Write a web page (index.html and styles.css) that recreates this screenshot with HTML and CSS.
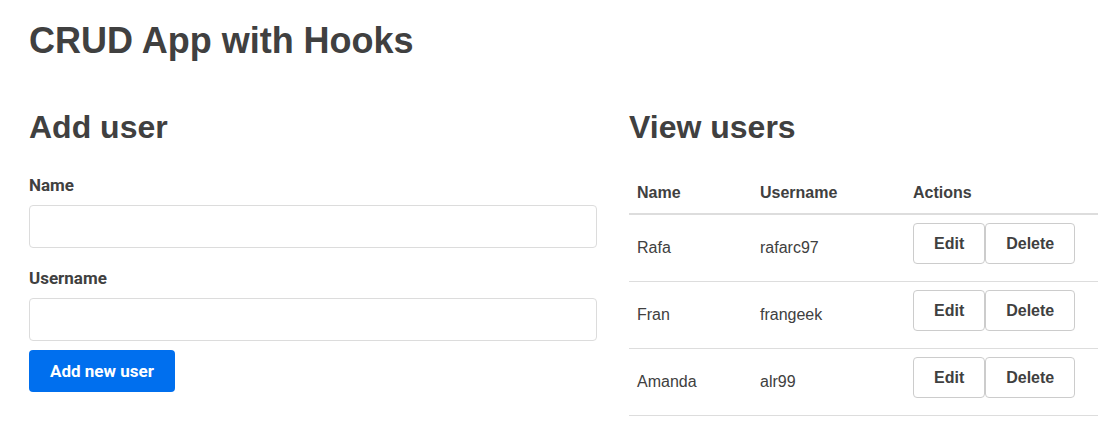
FILE: index.html
```html
<!DOCTYPE html>
<html lang="en">
<head>
<meta charset="utf-8">
<title>CRUD App with Hooks</title>
<link rel="stylesheet" href="styles.css">
</head>
<body>
<div class="container">
  <h1 class="title">CRUD App with Hooks</h1>
  <div class="columns">
    <section class="col">
      <h2 class="section-title">Add user</h2>
      <form class="user-form">
        <label class="field-label" for="name">Name</label>
        <input class="field-input" id="name" type="text">
        <label class="field-label" for="username">Username</label>
        <input class="field-input last" id="username" type="text">
        <button class="btn-primary" type="button">Add new user</button>
      </form>
    </section>
    <section class="col">
      <h2 class="section-title">View users</h2>
      <table class="user-table">
        <thead>
          <tr><th class="c-name">Name</th><th class="c-user">Username</th><th>Actions</th></tr>
        </thead>
        <tbody>
          <tr><td>Rafa</td><td>rafarc97</td><td><div class="actions"><button class="btn-muted">Edit</button><button class="btn-muted">Delete</button></div></td></tr>
          <tr><td>Fran</td><td>frangeek</td><td><div class="actions"><button class="btn-muted">Edit</button><button class="btn-muted">Delete</button></div></td></tr>
          <tr><td>Amanda</td><td>alr99</td><td><div class="actions"><button class="btn-muted">Edit</button><button class="btn-muted">Delete</button></div></td></tr>
        </tbody>
      </table>
    </section>
  </div>
</div>
</body>
</html>
```

FILE: styles.css
```css
html, body {
  margin: 0;
  padding: 0;
  overflow: hidden;
  background: #fff;
}
body {
  font-family: "Liberation Sans", Arial, sans-serif;
  color: #404040;
  font-size: 16px;
}
.container {
  padding: 19px 29px 0;
  width: 1168px;
}
.title {
  margin: 0;
  font-size: 36px;
  line-height: 1.2;
  font-weight: 700;
}
.columns {
  display: grid;
  grid-template-columns: 568px 568px;
  column-gap: 32px;
  margin-top: 46px;
}
.section-title {
  margin: 0;
  font-size: 32px;
  line-height: 1.2;
  font-weight: 700;
}
.user-form {
  display: flex;
  flex-direction: column;
  margin-top: 28px;
}
.field-label {
  font-family: Roboto, sans-serif;
  font-weight: 700;
  font-size: 17px;
  line-height: 20px;
  margin-bottom: 10px;
}
.field-input {
  box-sizing: border-box;
  height: 43px;
  border: 1px solid #dcdcdc;
  border-radius: 4px;
  margin: 0 0 20px;
  padding: 0 12px;
  font-size: 16px;
}
.field-input.last { margin-bottom: 9px; }
.btn-primary {
  align-self: flex-start;
  box-sizing: border-box;
  height: 42px;
  padding: 0 21px;
  border: 0;
  border-radius: 4px;
  background: #006fee;
  color: #fff;
  font-family: Roboto, sans-serif;
  font-weight: 700;
  font-size: 17px;
}
.user-table {
  width: 100%;
  border-collapse: collapse;
  margin-top: 24px;
}
.user-table th {
  text-align: left;
  font-weight: 700;
  padding: 13px 8px 11px;
  line-height: 18px;
  border-bottom: 2px solid #dddddd;
}
.user-table td {
  padding: 0 8px;
  height: 66px;
  line-height: 18px;
  border-bottom: 1px solid #dddddd;
}
.c-name { width: 107px; }
.c-user { width: 137px; }
.actions {
  display: flex;
  margin-bottom: 8px;
}
.btn-muted {
  box-sizing: border-box;
  height: 41px;
  padding: 0 20px;
  border: 1px solid #cccccc;
  border-radius: 4px;
  background: #fff;
  color: #404040;
  font-family: "Liberation Sans", Arial, sans-serif;
  font-weight: 700;
  font-size: 16px;
}
```
